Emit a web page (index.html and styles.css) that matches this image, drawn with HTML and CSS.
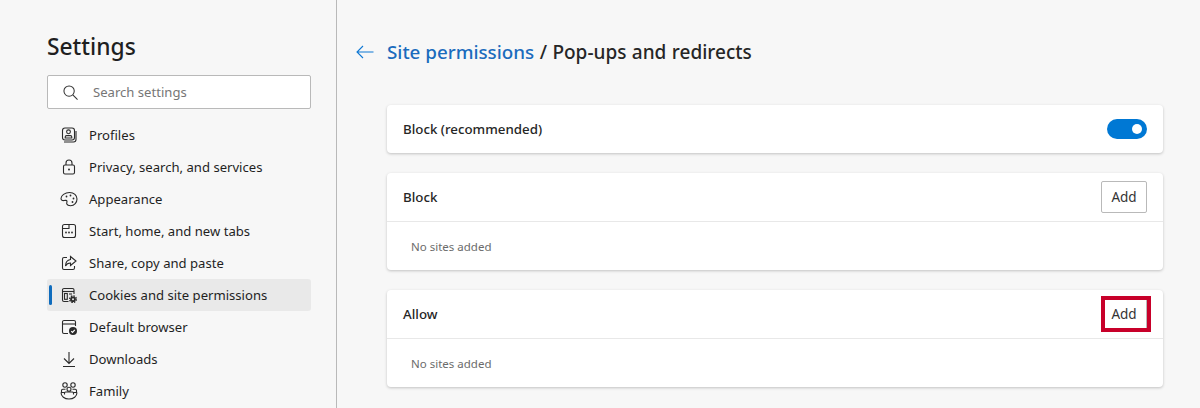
FILE: index.html
```
<!DOCTYPE html>
<html lang="en">
<head>
<meta charset="utf-8">
<title>Settings</title>
<link rel="stylesheet" href="styles.css">
</head>
<body>
<div class="page">
  <aside class="sidebar">
    <h1 class="brand">Settings</h1>
    <div class="search">
      <svg class="search-icon" viewBox="0 0 16 16"><circle cx="6.500" cy="6.500" r="5.500"/><path d="M10.500 10.500 15.500 15.500"/></svg>
      <span class="search-text">Search settings</span>
    </div>
    <nav class="nav">
      <a class="nav-item"><svg class="ico" viewBox="0 0 16 16"><rect x="1.500" y="1" width="12" height="12" rx="2.500"/><path d="M3 15h9.500a2.500 2.500 0 0 0 2.500-2.500V4"/><circle cx="7.500" cy="4.800" r="1.900"/><path d="M4.200 11v-1a1.400 1.400 0 0 1 1.400-1.400h3.800a1.400 1.400 0 0 1 1.400 1.400v1z"/></svg><span>Profiles</span></a>
      <a class="nav-item"><svg class="ico" viewBox="0 0 16 16"><rect x="2.500" y="6" width="11" height="9" rx="1.500"/><path d="M5 6V4a3 3 0 0 1 6 0v2"/><circle class="fill" cx="8" cy="10.500" r="1"/></svg><span>Privacy, search, and services</span></a>
      <a class="nav-item"><svg class="ico wide" viewBox="0 0 18 16"><path d="M9.500 1.500C5 1.500 1 4.500 1 7.500c0 1.700 1.500 2.300 3 2 1.500-.3 3-.3 3 1 0 1.200-.6 1.500-.2 2.500.5 1.300 2.200 1.800 3.700 1.800 4 0 6.500-3.300 6.500-6.800 0-3.700-3-6.500-7.500-6.500z"/><circle class="fill" cx="6.500" cy="5.500" r=".9"/><circle class="fill" cx="10.500" cy="4.500" r=".9"/><circle class="fill" cx="13.500" cy="7.500" r=".9"/><circle class="fill" cx="12.500" cy="11" r=".9"/></svg><span>Appearance</span></a>
      <a class="nav-item"><svg class="ico" viewBox="0 0 16 16"><rect x="1.500" y="1.500" width="13" height="13" rx="2"/><path d="M1.500 5.500h6.500V1.500"/><circle class="fill" cx="5" cy="9.500" r=".9"/><circle class="fill" cx="8" cy="9.500" r=".9"/><circle class="fill" cx="11" cy="9.500" r=".9"/></svg><span>Start, home, and new tabs</span></a>
      <a class="nav-item"><svg class="ico" viewBox="0 0 16 16"><path d="M6 2.500H3A1.500 1.500 0 0 0 1.500 4v9A1.500 1.500 0 0 0 3 14.500h9a1.500 1.500 0 0 0 1.500-1.500v-2"/><path d="M9.500 1.500 15 6l-5.500 4.500V8C7 8 5.500 9 4.500 11c0-3.500 2-6 5-6.500z"/></svg><span>Share, copy and paste</span></a>
      <a class="nav-item active"><svg class="ico" viewBox="0 0 16 16"><path d="M7.500 14.500H3A1.500 1.500 0 0 1 1.500 13V3A1.500 1.500 0 0 1 3 1.500h8.500A1.500 1.500 0 0 1 13 3v4"/><path d="M1.500 4.500H13"/><rect x="3.500" y="6.500" width="2.800" height="5.800"/><path d="M8 7h3"/><circle class="solid" cx="12" cy="12.200" r="2.800"/><circle class="teeth" cx="12" cy="12.200" r="3.300"/><circle class="hole" cx="12" cy="12.200" r="1"/></svg><span>Cookies and site permissions</span></a>
      <a class="nav-item"><svg class="ico" viewBox="0 0 16 16"><path d="M7 14.500H3A1.500 1.500 0 0 1 1.500 13V3A1.500 1.500 0 0 1 3 1.500h10A1.500 1.500 0 0 1 14.500 3v4"/><path d="M1.500 5h13"/><circle class="solid" cx="12" cy="12" r="4"/><path class="check" d="M10.200 12.100l1.300 1.300 2.300-2.600"/></svg><span>Default browser</span></a>
      <a class="nav-item"><svg class="ico" viewBox="0 0 16 16"><path d="M8 1v11M3 7.500 8 12.500l5-5M2 15.500h12"/></svg><span>Downloads</span></a>
      <a class="nav-item"><svg class="ico wide" viewBox="0 0 18 18"><circle cx="5" cy="3" r="2.200"/><circle cx="13" cy="3" r="2.200"/><circle cx="9" cy="7.200" r="2"/><path d="M5.500 7.300H2.800a1.300 1.300 0 0 0-1.300 1.300v1.900M12.500 7.300h2.700a1.300 1.300 0 0 1 1.300 1.300v1.900"/><path d="M1 10.500h3.500M13.500 10.500H17M4.500 12.500V11a1 1 0 0 1 1-1h7a1 1 0 0 1 1 1v1.500"/><path d="M1 10.500c0 4 3.500 6.500 8 6.500s8-2.500 8-6.500"/></svg><span>Family</span></a>
    </nav>
  </aside>
  <main class="main">
    <header class="title-row">
      <svg class="back" viewBox="0 0 18 14"><path d="M17.500 7H1M7 1 1 7l6 6"/></svg>
      <h2 class="title"><a class="crumb">Site permissions</a> / Pop-ups and redirects</h2>
    </header>
    <section class="card card-single">
      <div class="row">
        <span class="label">Block (recommended)</span>
        <span class="toggle"><span class="knob"></span></span>
      </div>
    </section>
    <section class="card">
      <div class="row row-head">
        <span class="label">Block</span>
        <button class="add">Add</button>
      </div>
      <div class="empty">No sites added</div>
    </section>
    <section class="card">
      <div class="row row-head">
        <span class="label">Allow</span>
        <span class="add-wrap">
          <button class="add">Add</button>
          <span class="highlight"></span>
        </span>
      </div>
      <div class="empty">No sites added</div>
    </section>
  </main>
</div>
</body>
</html>
```
FILE: styles.css
```
* { box-sizing: border-box; }
html, body { margin: 0; height: 408px; overflow: hidden; }
body {
  background: #f7f7f7;
  color: #1f1f1f;
  font-family: "Noto Sans", "Open Sans", "Liberation Sans", sans-serif;
  font-size: 13.1px;
}
.page { display: flex; height: 408px; overflow: hidden; }

.sidebar {
  flex: 0 0 337px;
  border-right: 1px solid #b9b9b9;
  padding: 30px 25px 0 47px;
}
.brand {
  margin: 0;
  height: 33px;
  font-size: 22.8px;
  line-height: 33px;
  font-weight: 500;
  color: #1f1f1f;
}
.search {
  display: flex;
  align-items: center;
  height: 34px;
  margin-top: 12px;
  padding-left: 15px;
  background: #fff;
  border: 1px solid #b9b9b9;
  border-radius: 2px;
}
.search-icon {
  width: 15px;
  height: 15px;
  fill: none;
  stroke: #333;
  stroke-width: 1.100;
}
.search-text { margin-left: 15px; color: #767676; }

.nav { margin-top: 10px; }
.nav-item {
  display: flex;
  align-items: center;
  height: 32px;
  padding-left: 14px;
  position: relative;
  border-radius: 3px;
  color: #1f1f1f;
}
.nav-item span { margin-left: 12px; }
.nav-item.active { background: #e9e9e9; }
.nav-item.active::before {
  content: "";
  position: absolute;
  left: 2px;
  top: 6px;
  width: 3px;
  height: 20px;
  border-radius: 2px;
  background: #0f6cbd;
}
.ico {
  flex: none;
  width: 16px;
  height: 16px;
  fill: none;
  stroke: #2b2b2b;
  stroke-width: 1.100;
}
.ico.wide { width: 18px; height: 18px; margin-left: -1px; margin-right: -1px; }
.ico .fill { fill: #2b2b2b; stroke: none; }
.ico .hole { fill: #e9e9e9; stroke: none; }
.ico .solid { fill: #2b2b2b; stroke: none; }
.ico .teeth { stroke-width: 1.400; stroke-dasharray: 1.500 1.090; }
.ico .check { stroke: #fff; stroke-width: 1.200; }

.main { flex: 1; padding-left: 19px; padding-right: 37px; min-width: 0; }
.title-row {
  display: flex;
  align-items: center;
  height: 30px;
  margin-top: 37px;
}
.back {
  flex: none;
  width: 18px;
  height: 14px;
  fill: none;
  stroke: #0f78d4;
  stroke-width: 1.100;
}
.title {
  margin: 0 0 0 13px;
  font-size: 19px;
  line-height: 30px;
  font-weight: 500;
  color: #262626;
  word-spacing: .5px;
}
.crumb { color: #1a6bbd; font-size: 18.8px; word-spacing: 0; }

.card {
  margin: 20px 0 0 31px;
  background: #fff;
  border-radius: 4px;
  box-shadow: 0 1px 3px rgba(0, 0, 0, .22);
}
.card-single { margin-top: 38px; }
.row {
  display: flex;
  align-items: center;
  justify-content: space-between;
  height: 48px;
  padding: 0 16px;
}
.row-head { height: 49px; border-bottom: 1px solid #e8e8e8; }
.label { font-size: 13.3px; font-weight: 500; color: #262626; }
.toggle {
  display: flex;
  align-items: center;
  justify-content: flex-end;
  width: 40px;
  height: 20px;
  padding-right: 5px;
  border-radius: 10px;
  background: #0078d4;
}
.knob { width: 10px; height: 10px; border-radius: 50%; background: #fff; }
.add-wrap { position: relative; display: block; height: 32px; }
.add {
  display: block;
  width: 46px;
  height: 32px;
  padding: 0;
  background: #fff;
  border: 1px solid #b9b9b9;
  border-radius: 2px;
  color: #333;
  font-family: inherit;
  font-size: 13.5px;
}
.highlight {
  position: absolute;
  left: 0;
  top: -2px;
  width: 50px;
  height: 36px;
  border: 4px solid #c8002a;
}
.empty {
  height: 48px;
  padding-left: 24px;
  font-size: 11.5px;
  line-height: 50px;
  color: #6b6b6b;
}
```
